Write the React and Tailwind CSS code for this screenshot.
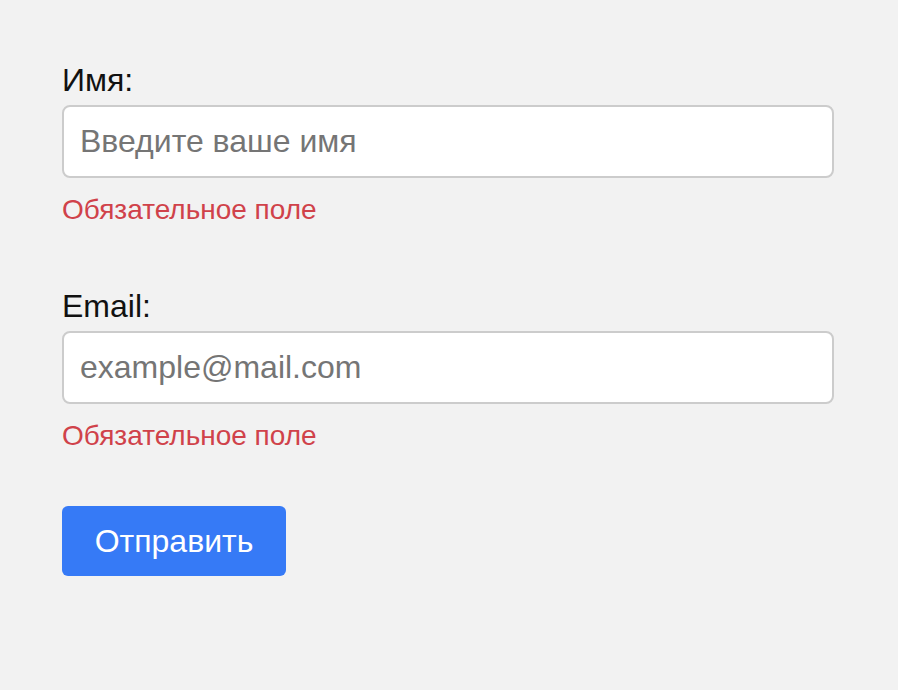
import React, { useState } from "react";

const Field = ({ label, placeholder, value, onChange, type = "text" }) => (
  <div className="flex flex-col">
    <label className="text-[32px] leading-[37px] text-[#111]">{label}</label>
    <input
      type={type}
      value={value}
      onChange={onChange}
      placeholder={placeholder}
      className="mt-[6px] h-[73px] w-full rounded-lg border-2 border-[#cccccc] bg-white px-4 text-[32px] text-[#111] outline-none placeholder:text-[#757575]"
    />
    <p className="mt-4 text-[28px] leading-[32px] text-[#d0424a]">Обязательное поле</p>
  </div>
);

const App = () => {
  const [name, setName] = useState("");
  const [email, setEmail] = useState("");

  return (
    <div
      className="min-h-screen w-full bg-[#f2f2f2] pl-[62px] pt-[62px]"
      style={{ fontFamily: '"Liberation Sans", Arial, sans-serif' }}
    >
      <form className="flex w-[772px] flex-col" onSubmit={(e) => e.preventDefault()}>
        <Field label="Имя:" placeholder="Введите ваше имя" value={name} onChange={(e) => setName(e.target.value)} />
        <div className="mt-[62px]">
          <Field label="Email:" type="email" placeholder="example@mail.com" value={email} onChange={(e) => setEmail(e.target.value)} />
        </div>
        <div className="mt-[54px]">
          <button
            type="submit"
            className="h-[70px] w-[224px] rounded-md bg-[#367af6] text-[32px] text-white"
          >
            Отправить
          </button>
        </div>
      </form>
    </div>
  );
};

export default App;
